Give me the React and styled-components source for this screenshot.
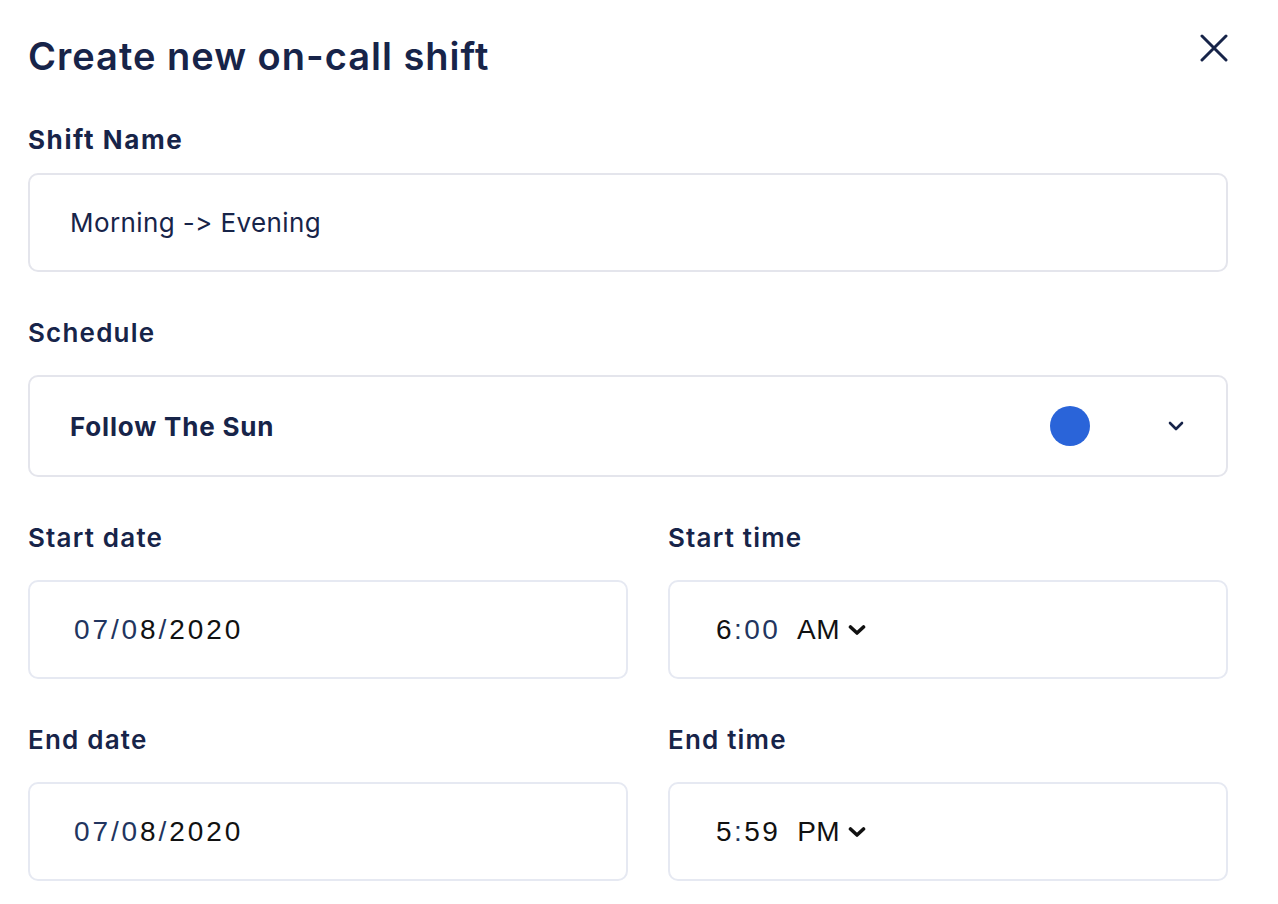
import React from 'react';
import styled, { createGlobalStyle } from 'styled-components';

const navy = '#172449';

const GlobalStyle = createGlobalStyle`
    body {
        margin: 0;
        background: #ffffff;
        font-family: 'Inter', 'Noto Sans', sans-serif;
        font-variant-ligatures: none;
        font-feature-settings: 'calt' 0, 'liga' 0;
        color: ${navy};
    }
`;

const Container = styled.div`
    display: flex;
    flex-direction: column;
    gap: 46px;
    padding: 34px 50px 0 28px;
`;

const Header = styled.div`
    display: flex;
    justify-content: space-between;
    align-items: flex-start;
    margin-bottom: 1px;
`;

const Title = styled.h1`
    margin: 0;
    font-size: 38px;
    line-height: 44px;
    font-weight: 600;
    letter-spacing: 1px;
    color: ${navy};
`;

const CloseButton = styled.button`
    display: flex;
    border: none;
    background: none;
    padding: 0;
    margin: 0;
    cursor: pointer;
    color: ${navy};
`;

const Field = styled.div`
    display: flex;
    flex-direction: column;
`;

const Label = styled.label`
    font-size: 26px;
    line-height: 30px;
    font-weight: ${p => (p.$strong ? 700 : 600)};
    letter-spacing: ${p => (p.$strong ? 1.6 : 1.2)}px;
    margin-bottom: ${p => (p.$tight ? 18 : 27)}px;
    color: ${navy};
`;

const Box = styled.div`
    display: flex;
    align-items: center;
    box-sizing: border-box;
    height: ${p => p.$height}px;
    padding: 0 42px 0 40px;
    border: 2px solid ${p => p.$border || '#e4e5ec'};
    border-radius: 10px;
    background: #fff;
`;

const InputText = styled.span`
    font-size: 26px;
    font-weight: ${p => (p.$bold ? 700 : 400)};
    letter-spacing: ${p => (p.$bold ? 0.8 : 0.4)}px;
    color: ${navy};
    flex: 1;
`;

const Dot = styled.span`
    width: 40px;
    height: 40px;
    border-radius: 50%;
    background: #2a64d9;
    margin-right: 78px;
`;

const Row = styled.div`
    display: grid;
    grid-template-columns: 600px 1fr;
    column-gap: 40px;
`;

const NativeValue = styled.span`
    display: flex;
    align-items: center;
    font-family: 'Liberation Sans', Arial, sans-serif;
    font-size: 28px;
    letter-spacing: ${p => p.$spacing}px;
    color: #111;
    padding-left: ${p => p.$pad}px;
`;

const Part = styled.span`
    color: ${p => (p.$blue ? '#22355f' : '#111')};
`;

const Meridiem = styled.span`
    margin-left: 17px;
    letter-spacing: 0.5px;
`;

const SelectArrow = styled.span`
    display: flex;
    margin-left: 8px;
    color: #111;
`;

const DateValue = () => (
    <NativeValue $pad={4} $spacing={2.9}>
        <Part $blue>07/0</Part>
        <Part>8</Part>
        <Part $blue>/</Part>
        <Part>2020</Part>
    </NativeValue>
);

const TimeValue = ({ parts, meridiem }) => (
    <NativeValue $pad={6} $spacing={2.4}>
        {parts.map((p, i) => (
            <Part key={i} $blue={p.blue}>{p.text}</Part>
        ))}
        <Meridiem>{meridiem}</Meridiem>
        <SelectArrow>
            <svg width="18" height="12" viewBox="0 0 18 12" fill="none" stroke="currentColor"
                strokeWidth="3.6" strokeLinecap="round" strokeLinejoin="round">
                <path d="M2.5 3l6.5 6 6.5-6" />
            </svg>
        </SelectArrow>
    </NativeValue>
);

const App = () => (
    <>
        <GlobalStyle />
        <Container>
            <Header>
                <Title>Create new on-call shift</Title>
                <CloseButton aria-label="Close">
                    <svg width="28" height="28" viewBox="0 0 28 28" fill="none" stroke="currentColor"
                        strokeWidth="3" strokeLinecap="round">
                        <path d="M2 2l24 24M26 2L2 26" />
                    </svg>
                </CloseButton>
            </Header>

            <Field>
                <Label $strong $tight>Shift Name</Label>
                <Box $height={99}>
                    <InputText>Morning -&gt; Evening</InputText>
                </Box>
            </Field>

            <Field>
                <Label>Schedule</Label>
                <Box $height={102}>
                    <InputText $bold>Follow The Sun</InputText>
                    <Dot />
                    <svg width="16" height="10" viewBox="0 0 16 10" fill="none" stroke={navy}
                        strokeWidth="2.6" strokeLinecap="round" strokeLinejoin="round">
                        <path d="M2 2l6 6 6-6" />
                    </svg>
                </Box>
            </Field>

            <Row>
                <Field>
                    <Label>Start date</Label>
                    <Box $height={99} $border="#e6e9f2">
                        <DateValue />
                    </Box>
                </Field>
                <Field>
                    <Label>Start time</Label>
                    <Box $height={99} $border="#e6e9f2">
                        <TimeValue
                            parts={[{ text: '6' }, { text: ':00', blue: true }]}
                            meridiem="AM"
                        />
                    </Box>
                </Field>
            </Row>

            <Row>
                <Field>
                    <Label>End date</Label>
                    <Box $height={99} $border="#e6e9f2">
                        <DateValue />
                    </Box>
                </Field>
                <Field>
                    <Label>End time</Label>
                    <Box $height={99} $border="#e6e9f2">
                        <TimeValue
                            parts={[{ text: '5' }, { text: ':', blue: true }, { text: '59' }]}
                            meridiem="PM"
                        />
                    </Box>
                </Field>
            </Row>
        </Container>
    </>
);

export default App;
